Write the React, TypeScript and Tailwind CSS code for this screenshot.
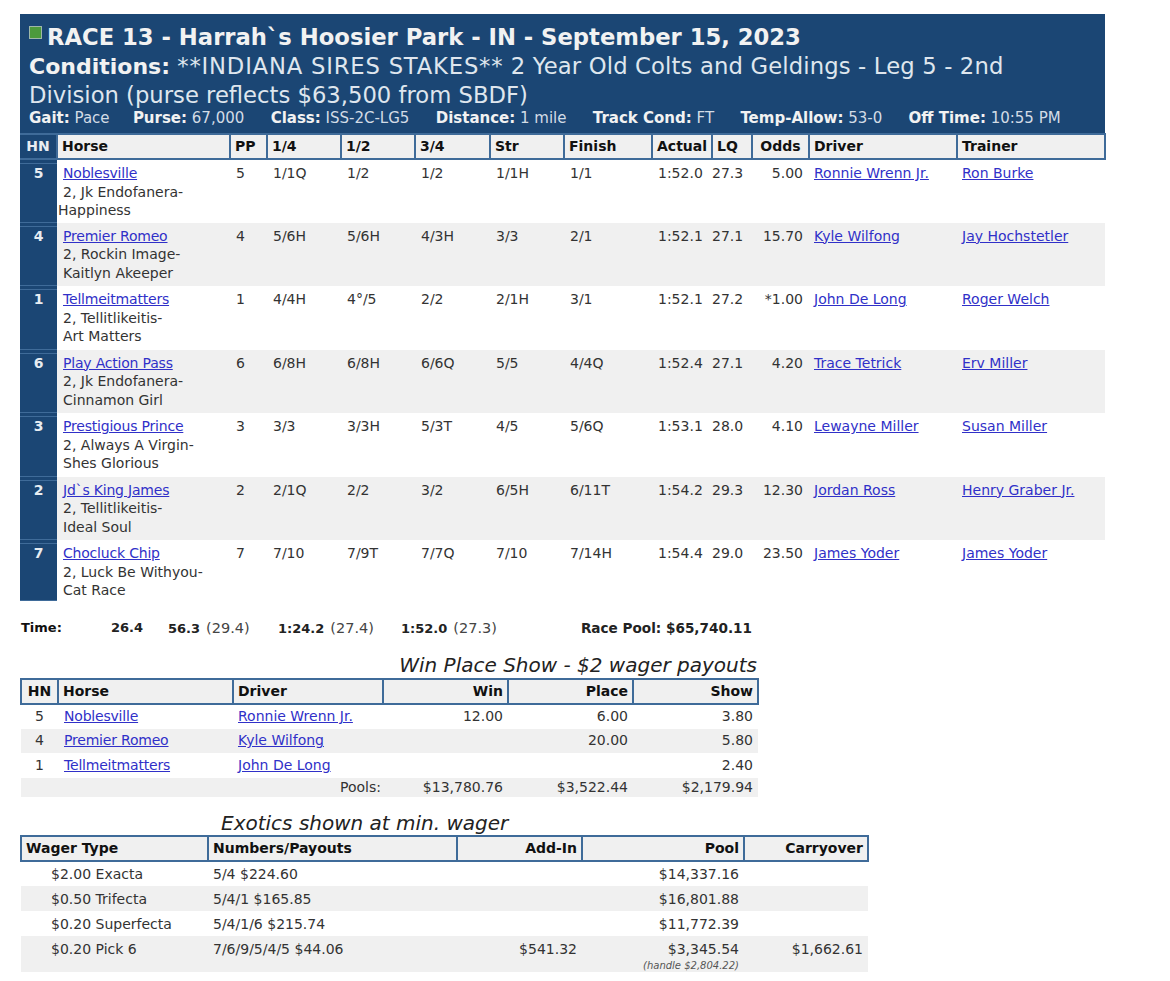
const font = "[font-family:Verdana,'DejaVu_Sans',sans-serif]";

type Row = {
  hn: string;
  horse: string;
  line1: string;
  line2: string;
  pp: string;
  calls: string[];
  actual: string;
  lq: string;
  odds: string;
  driver: string;
  trainer: string;
};

const rows: Row[] = [
  { hn: "5", horse: "Noblesville", line1: "2, Jk Endofanera-", line2: "Happiness", pp: "5", calls: ["1/1Q", "1/2", "1/2", "1/1H", "1/1"], actual: "1:52.0", lq: "27.3", odds: "5.00", driver: "Ronnie Wrenn Jr.", trainer: "Ron Burke" },
  { hn: "4", horse: "Premier Romeo", line1: "2, Rockin Image-", line2: "Kaitlyn Akeeper", pp: "4", calls: ["5/6H", "5/6H", "4/3H", "3/3", "2/1"], actual: "1:52.1", lq: "27.1", odds: "15.70", driver: "Kyle Wilfong", trainer: "Jay Hochstetler" },
  { hn: "1", horse: "Tellmeitmatters", line1: "2, Tellitlikeitis-", line2: "Art Matters", pp: "1", calls: ["4/4H", "4°/5", "2/2", "2/1H", "3/1"], actual: "1:52.1", lq: "27.2", odds: "*1.00", driver: "John De Long", trainer: "Roger Welch" },
  { hn: "6", horse: "Play Action Pass", line1: "2, Jk Endofanera-", line2: "Cinnamon Girl", pp: "6", calls: ["6/8H", "6/8H", "6/6Q", "5/5", "4/4Q"], actual: "1:52.4", lq: "27.1", odds: "4.20", driver: "Trace Tetrick", trainer: "Erv Miller" },
  { hn: "3", horse: "Prestigious Prince", line1: "2, Always A Virgin-", line2: "Shes Glorious", pp: "3", calls: ["3/3", "3/3H", "5/3T", "4/5", "5/6Q"], actual: "1:53.1", lq: "28.0", odds: "4.10", driver: "Lewayne Miller", trainer: "Susan Miller" },
  { hn: "2", horse: "Jd`s King James", line1: "2, Tellitlikeitis-", line2: "Ideal Soul", pp: "2", calls: ["2/1Q", "2/2", "3/2", "6/5H", "6/11T"], actual: "1:54.2", lq: "29.3", odds: "12.30", driver: "Jordan Ross", trainer: "Henry Graber Jr." },
  { hn: "7", horse: "Chocluck Chip", line1: "2, Luck Be Withyou-", line2: "Cat Race", pp: "7", calls: ["7/10", "7/9T", "7/7Q", "7/10", "7/14H"], actual: "1:54.4", lq: "29.0", odds: "23.50", driver: "James Yoder", trainer: "James Yoder" },
];

const mainCols = [37, 173, 37, 74, 74, 75, 74, 88, 60, 40, 57, 148, 148];
const mainHead = ["HN", "Horse", "PP", "1/4", "1/2", "3/4", "Str", "Finish", "Actual", "LQ", "Odds", "Driver", "Trainer"];

const link = "text-[#3030c8] underline";
const th = "border-2 border-[#3f6b99] bg-[#f0f0f0] h-[25px] px-[4px] text-[14px] font-bold text-[#111] text-left";
const cell = "align-top pt-[4px] text-[14px] leading-[18.5px] text-[#333]";

function Legend({ stats }: { stats: [string, string][] }) {
  return (
    <div className="flex gap-[26.3px] pl-[9px] text-[15px] leading-[18px] text-[#d3dce6] whitespace-nowrap">
      {stats.map(([k, v]) => (
        <span key={k} className="first:-mr-[3px]">
          <b className="text-[#f2f2f2]">{k}:</b> {v}
        </span>
      ))}
    </div>
  );
}

function MainTable() {
  return (
    <table className="table-fixed border-collapse w-[1085px]">
      <colgroup>
        {mainCols.map((w, i) => (
          <col key={i} style={{ width: w }} />
        ))}
      </colgroup>
      <thead>
        <tr>
          {mainHead.map((h, i) => (
            <th
              key={h}
              className={
                i === 0
                  ? "bg-[#1b4674] border-y-2 border-[#3f6b99] text-[14px] font-bold text-[#e8edf2] text-center h-[25px]"
                  : h === "Odds"
                    ? th + " !text-center"
                    : th
              }
            >
              {h}
            </th>
          ))}
        </tr>
      </thead>
      <tbody>
        {rows.map((r, i) => (
          <tr key={r.hn} className={(i % 2 ? "bg-[#f0f0f0] " : "") + (i === 6 ? "h-[61px]" : "h-[63.5px]")}>
            <td className="bg-[#1b4674] shadow-[inset_0_3px_0_#1b4674,inset_0_4px_0_#3f6b99,inset_0_-1px_0_#3f6b99] align-top pt-[4px] text-center text-[14px] leading-[18px] font-bold text-[#e8edf2]">
              {r.hn}
            </td>
            <td className={cell + " pl-[6px] whitespace-nowrap"}>
              <a className={link + " tracking-[-0.2px]"}>{r.horse}</a>
              <br />
              {r.line1}
              <br />
              <span className={i === 0 ? "-ml-[5px]" : ""}>{r.line2}</span>
            </td>
            <td className={cell + " pl-[6px]"}>{r.pp}</td>
            {r.calls.map((c, j) => (
              <td key={j} className={cell + " pl-[6px]"}>
                {c}
              </td>
            ))}
            <td className={cell + " pl-[6px]"}>{r.actual}</td>
            <td className={cell}>{r.lq}</td>
            <td className={cell + " pr-[6px] text-right"}>{r.odds}</td>
            <td className={cell + " pl-[5px] whitespace-nowrap"}>
              <a className={link}>{r.driver}</a>
            </td>
            <td className={cell + " pl-[5px] whitespace-nowrap"}>
              <a className={link}>{r.trainer}</a>
            </td>
          </tr>
        ))}
      </tbody>
    </table>
  );
}

function Split({ value, lap, className }: { value: string; lap: string; className: string }) {
  return (
    <span className={className}>
      <b className="text-[13px] text-[#222]">{value}</b>
      <span className="ml-[6px]">{lap}</span>
    </span>
  );
}

function TimeLine() {
  return (
    <div className="mt-[18px] flex h-[18px] w-[732px] pl-[1px] text-[14.5px] leading-[18px] text-[#444]">
      <b className="w-[90px] text-[13px] text-[#111]">Time:</b>
      <b className="w-[57px] text-[13px] text-[#222]">26.4</b>
      <Split className="w-[110px]" value="56.3" lap="(29.4)" />
      <Split className="w-[123px]" value="1:24.2" lap="(27.4)" />
      <Split className="" value="1:52.0" lap="(27.3)" />
      <b className="ml-auto text-[13.6px] text-[#222]">Race Pool: $65,740.11</b>
    </div>
  );
}

const wps = [
  ["5", "Noblesville", "Ronnie Wrenn Jr.", "12.00", "6.00", "3.80"],
  ["4", "Premier Romeo", "Kyle Wilfong", "", "20.00", "5.80"],
  ["1", "Tellmeitmatters", "John De Long", "", "", "2.40"],
];

function PayoutTable() {
  const cols = [37, 175, 150, 125, 125, 125];
  const td = "text-right pr-[5px] text-[14px] text-[#333]";
  return (
    <table className="table-fixed border-collapse w-[736px]">
      <colgroup>
        {cols.map((w, i) => (
          <col key={i} style={{ width: w }} />
        ))}
      </colgroup>
      <thead>
        <tr>
          <th className={th + " !text-center"}>HN</th>
          <th className={th}>Horse</th>
          <th className={th}>Driver</th>
          <th className={th + " !text-right"}>Win</th>
          <th className={th + " !text-right"}>Place</th>
          <th className={th + " !text-right"}>Show</th>
        </tr>
      </thead>
      <tbody>
        {wps.map((r, i) => (
          <tr key={r[0]} className={i % 2 ? "bg-[#f0f0f0] h-[24.5px]" : "h-[24.5px]"}>
            <td className="text-center text-[14px] text-[#333]">{r[0]}</td>
            <td className="pl-[6px] text-[14px]"><a className={link + " tracking-[-0.2px]"}>{r[1]}</a></td>
            <td className="pl-[5px] text-[14px]"><a className={link}>{r[2]}</a></td>
            <td className={td}>{r[3]}</td>
            <td className={td}>{r[4]}</td>
            <td className={td}>{r[5]}</td>
          </tr>
        ))}
        <tr className="bg-[#f0f0f0] h-[19px]">
          <td colSpan={3} className="text-right pr-[2px] text-[14px] leading-[19px] text-[#333]">Pools:</td>
          <td className={td + " leading-[19px]"}>$13,780.76</td>
          <td className={td + " leading-[19px]"}>$3,522.44</td>
          <td className={td + " leading-[19px]"}>$2,179.94</td>
        </tr>
      </tbody>
    </table>
  );
}

const exotics = [
  ["$2.00 Exacta", "5/4 $224.60", "", "$14,337.16", ""],
  ["$0.50 Trifecta", "5/4/1 $165.85", "", "$16,801.88", ""],
  ["$0.20 Superfecta", "5/4/1/6 $215.74", "", "$11,772.39", ""],
  ["$0.20 Pick 6", "7/6/9/5/4/5 $44.06", "$541.32", "$3,345.54", "$1,662.61"],
];

function ExoticsTable() {
  const cols = [187, 249, 125, 162, 124];
  return (
    <table className="table-fixed border-collapse w-[847px]">
      <colgroup>
        {cols.map((w, i) => (
          <col key={i} style={{ width: w }} />
        ))}
      </colgroup>
      <thead>
        <tr>
          <th className={th}>Wager Type</th>
          <th className={th}>Numbers/Payouts</th>
          <th className={th + " !text-right"}>Add-In</th>
          <th className={th + " !text-right"}>Pool</th>
          <th className={th + " !text-right"}>Carryover</th>
        </tr>
      </thead>
      <tbody>
        {exotics.map((r, i) => {
          const td = "align-top text-[14px] leading-[18px] text-[#333] " + (i === 0 ? "pt-[3px]" : "pt-[4px]");
          return (
            <tr key={r[0]} className={i % 2 ? "bg-[#f0f0f0]" : ""}>
              <td className={td + " pl-[30px] h-[25px]"}>{r[0]}</td>
              <td className={td + " pl-[5px]"}>{r[1]}</td>
              <td className={td + " text-right pr-[5px]"}>{r[2]}</td>
              <td className={td + " text-right pr-[5px]"}>
                {r[3]}
                {i === 3 && (
                  <div className="mt-[2px] text-[10px] leading-[12px] italic text-[#555] whitespace-nowrap">(handle $2,804.22)</div>
                )}
              </td>
              <td className={td + " text-right pr-[5px]"}>{r[4]}</td>
            </tr>
          );
        })}
      </tbody>
    </table>
  );
}

export default function App() {
  return (
    <div className={font + " min-h-[981px] bg-white pl-[20px] pt-[14px]"}>
      <div className="w-[1085px] bg-[#1b4674] pt-[9px]">
        <div className="flex items-start pl-[9px] text-[22.7px] leading-[28px] font-bold text-[#f2f2f2]">
          <span className="mt-[3px] mr-[5px] size-[13px] bg-[#4c9a3c] border border-[#9fb8a8]" />
          RACE 13 - Harrah`s Hoosier Park - IN - September 15, 2023
        </div>
        <div className="mt-[1px] pl-[9px] pr-[60px] text-[22.7px] leading-[28px] tracking-[0.15px] text-[#dfe6ee]">
          <b className="text-[22px] tracking-normal text-[#f2f2f2]">Conditions:</b>{" "}
          <span className="tracking-[0.8px]">**INDIANA SIRES STAKES**</span> 2 Year Old Colts and Geldings - Leg 5 - 2nd{" "}
          <span className="tracking-normal">Division (purse reflects $63,500 from SBDF)</span>
        </div>
        <Legend
          stats={[
            ["Gait", "Pace"],
            ["Purse", "67,000"],
            ["Class", "ISS-2C-LG5"],
            ["Distance", "1 mile"],
            ["Track Cond", "FT"],
            ["Temp-Allow", "53-0"],
            ["Off Time", "10:55 PM"],
          ]}
        />
        <div className="h-[6px]" />
      </div>
      <MainTable />
      <TimeLine />
      <div className="mt-[16px] w-[737px] text-right text-[20px] leading-[25px] italic text-[#222]">
        Win Place Show - $2 wager payouts
      </div>
      <PayoutTable />
      <div className="mt-[14px] pl-[201px] text-[20px] leading-[24px] italic text-[#222]">
        Exotics shown at min. wager
      </div>
      <ExoticsTable />
    </div>
  );
}
